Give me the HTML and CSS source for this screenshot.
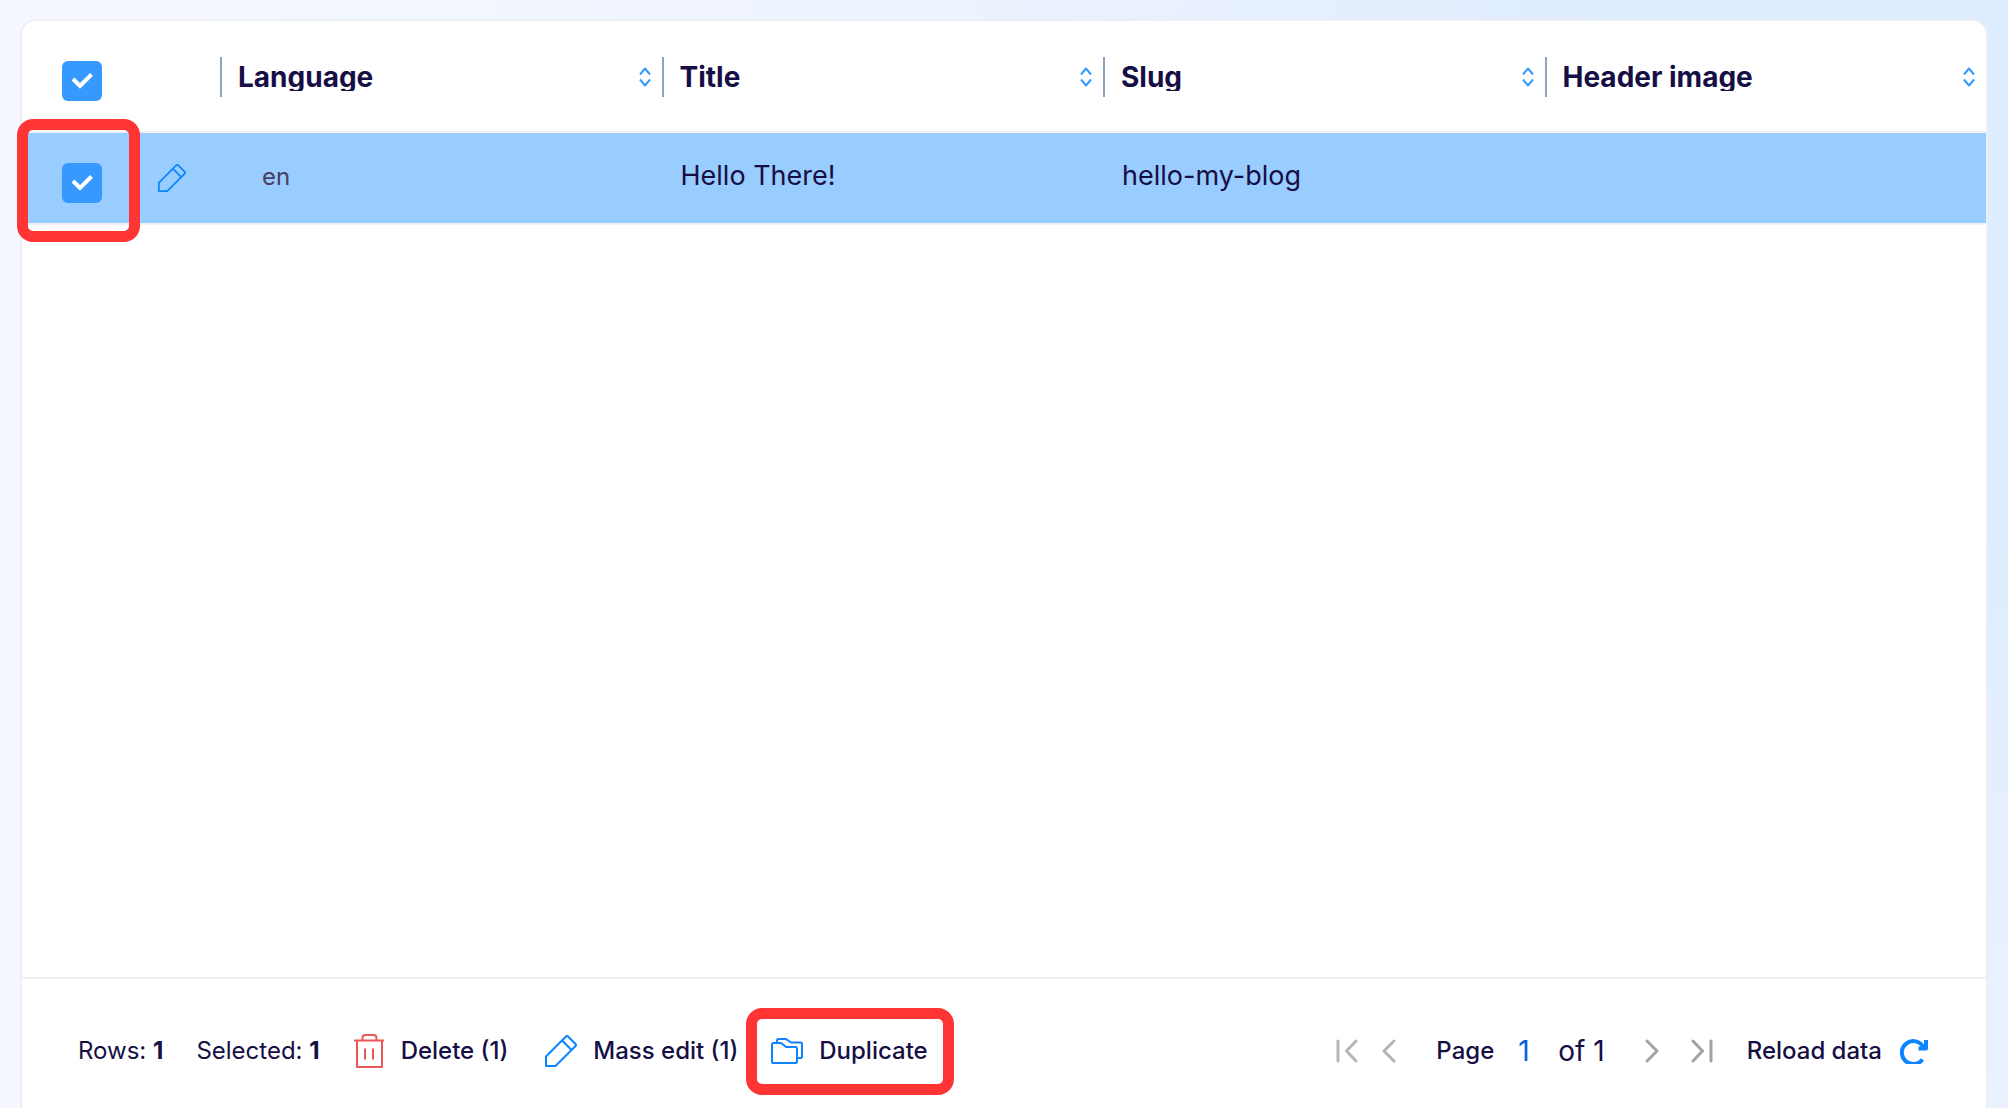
FILE: index.html
```html
<!DOCTYPE html>
<html lang="en">
<head>
<meta charset="utf-8">
<meta name="viewport" content="width=device-width, initial-scale=1">
<title>Blog posts</title>
<link rel="stylesheet" href="styles.css">
</head>
<body>
<svg class="sprite" aria-hidden="true">
  <symbol id="sort" viewBox="0 0 12 20"><path d="M1 7.500 6 1.500l5 6M1 12.500l5 6 5-6"/></symbol>
  <symbol id="pencil" viewBox="0 0 32 32"><path d="M1 31v-9.500L20.700 1.700q1.300-1.300 2.600 0l7 7q1.300 1.300 0 2.600L10.500 31zM17.300 5.500l9.200 9.500"/></symbol>
  <symbol id="trash" viewBox="0 0 32 34"><path d="M1 6.500h30M4 7v26h25V7M9.500 6V4q0-3 3-3h8q3 0 3 3v2M12 14.500v11M20 14.500v11"/></symbol>
  <symbol id="folders" viewBox="0 0 32 26"><path d="M6 5V2.500q0-1.500 1.500-1.500H14q1.500 0 2.500 1l3.500 2.500h9.500q1.500 0 1.500 1.500v12.500q0 1.500-1.500 1.500H27M1 6.500Q1 5 2.500 5H9q1.500 0 2.500 1l3.500 3h9.500q1.500 0 1.500 1.500v13q0 1.500-1.500 1.500h-23Q1 25 1 23.500z"/></symbol>
  <symbol id="first" viewBox="0 0 22 24"><path d="M2 2v20M20 2 10.500 12l9.500 10"/></symbol>
  <symbol id="prev" viewBox="0 0 14 24"><path d="M12 2 2 12l10 10"/></symbol>
  <symbol id="next" viewBox="0 0 14 24"><path d="m2 2 10 10L2 22"/></symbol>
  <symbol id="last" viewBox="0 0 22 24"><path d="m2 2 9.500 10L2 22M20 2v20"/></symbol>
  <symbol id="reload" viewBox="0 0 28 26"><path d="M22.500 21.500A11.500 11.500 0 1 1 23.500 9.200M26 2v8.500H18.500"/></symbol>
</svg>
<main class="card">
  <table class="grid">
    <thead>
      <tr>
        <th class="col-check" scope="col"><input class="check" type="checkbox" aria-label="Select all rows" checked></th>
        <th class="col-edit" scope="col"></th>
        <th class="col" scope="col"><button class="sorter" type="button"><span>Language</span><svg class="sort-icon"><use href="#sort"/></svg></button></th>
        <th class="col" scope="col"><button class="sorter" type="button"><span>Title</span><svg class="sort-icon"><use href="#sort"/></svg></button></th>
        <th class="col" scope="col"><button class="sorter" type="button"><span>Slug</span><svg class="sort-icon"><use href="#sort"/></svg></button></th>
        <th class="col" scope="col"><button class="sorter" type="button"><span>Header image</span><svg class="sort-icon"><use href="#sort"/></svg></button></th>
      </tr>
    </thead>
    <tbody>
      <tr class="selected">
        <td class="col-check"><input class="check" type="checkbox" aria-label="Select row" checked><span class="callout callout-check"></span></td>
        <td class="col-edit"><button class="edit" type="button" aria-label="Edit row"><svg class="edit-icon"><use href="#pencil"/></svg></button></td>
        <td class="lang">en</td>
        <td>Hello There!</td>
        <td>hello-my-blog</td>
        <td></td>
      </tr>
    </tbody>
  </table>
  <footer class="bar">
    <div class="group">
      <span>Rows: <b>1</b></span>
      <span>Selected: <b>1</b></span>
      <button class="action" type="button"><svg class="icon danger" height="34"><use href="#trash"/></svg>Delete (1)</button>
      <button class="action spaced" type="button"><svg class="icon" height="32"><use href="#pencil"/></svg>Mass edit (1)</button>
      <button class="action" type="button"><svg class="icon" height="26"><use href="#folders"/></svg>Duplicate<span class="callout callout-action"></span></button>
    </div>
    <div class="group pager">
      <button class="nav" type="button" aria-label="First page" disabled><svg width="22" height="24"><use href="#first"/></svg></button>
      <button class="nav" type="button" aria-label="Previous page" disabled><svg width="14" height="24"><use href="#prev"/></svg></button>
      <label class="page" for="page">Page</label>
      <input class="page-input" id="page" type="text" value="1">
      <span class="total">of 1</span>
      <button class="nav next" type="button" aria-label="Next page"><svg width="14" height="24"><use href="#next"/></svg></button>
      <button class="nav next" type="button" aria-label="Last page"><svg width="22" height="24"><use href="#last"/></svg></button>
      <button class="action reload" type="button">Reload data<svg class="reload-icon"><use href="#reload"/></svg></button>
    </div>
  </footer>
</main>
</body>
</html>
```
FILE: styles.css
```css
* {
  box-sizing: border-box;
}

body {
  display: flex;
  height: 100vh;
  margin: 0;
  padding: 19px 20px 0;
  overflow: hidden;
  background: radial-gradient(circle at 100% 10%, #deecff 0, #deecff 18%, #e3effe 28%, #e9f0fe 38%, #f0f5ff 60%, #f5f8ff 85%);
  color: #160f45;
  font: 400 24px/32px Inter, "Liberation Sans", sans-serif;
}

button,
input {
  margin: 0;
  padding: 0;
  border: 0;
  background: none;
  color: inherit;
  font: inherit;
}

svg {
  display: block;
  flex: none;
  fill: none;
  stroke: currentColor;
  stroke-width: 2px;
  stroke-linejoin: round;
}

.sprite {
  display: none;
}

.card {
  display: flex;
  flex: 1;
  flex-direction: column;
  min-width: 0;
  border: 2px solid #eeeef5;
  border-bottom: 0;
  border-radius: 16px 16px 0 0;
  background: #fff;
}

.grid {
  width: 100%;
  border-collapse: separate;
  border-spacing: 0;
  table-layout: fixed;
}

th,
td {
  padding: 0;
  border-bottom: 2px solid #f0f0f5;
  text-align: left;
}

th {
  height: 112px;
}

td {
  height: 92px;
  padding: 0 0 5px 19px;
  font-size: 27px;
}

.col-check {
  position: relative;
  width: 118px;
  padding: 10px 0 0 40px;
}

.col-edit {
  width: 80px;
  padding: 7px 0 0 18px;
}

.selected td {
  background: #99ccff;
}

.lang {
  padding: 0 0 2px 42px;
  color: #45405f;
  font-size: 24px;
}

.check {
  display: block;
  width: 40px;
  height: 40px;
  border-radius: 6px;
  background: #3699ff;
  appearance: none;
}

.check:checked {
  background-image: url("data:image/svg+xml,%3Csvg xmlns='http://www.w3.org/2000/svg' viewBox='0 0 40 40'%3E%3Cpath d='m11 18 7 7L29.500 13.500' fill='none' stroke='white' stroke-width='4'/%3E%3C/svg%3E");
}

.sorter {
  display: flex;
  align-items: center;
  justify-content: space-between;
  width: 100%;
  height: 40px;
  margin-top: 2px;
  padding: 0 11px 0 16px;
  border-left: 2px solid #8ea3bd;
  font-size: 28px;
  font-weight: 700;
  line-height: 28px;
}

.sorter span {
  overflow: hidden;
}

.sort-icon {
  width: 12px;
  height: 20px;
  color: #3699ff;
}

.edit-icon {
  width: 28px;
  height: 28px;
  color: #0a84ff;
}

.bar {
  display: flex;
  flex: none;
  align-items: center;
  justify-content: space-between;
  height: 146px;
  margin: auto 0 -15px;
  padding: 0 58px 0 56px;
  border-top: 2px solid #eeeef5;
  white-space: nowrap;
}

.group {
  display: flex;
  align-items: center;
  gap: 33px;
}

b {
  font-weight: 700;
}

.action {
  position: relative;
  display: flex;
  align-items: center;
  gap: 16px;
  font-weight: 500;
}

.spaced {
  margin-left: 4px;
}

.icon {
  width: 32px;
  color: #0a84ff;
}

.danger {
  color: #eb5757;
}

.pager {
  gap: 24px;
}

.nav {
  color: #b5b5b5;
}

.nav svg {
  stroke-linecap: round;
  stroke-width: 3px;
}

.next {
  margin-left: 8px;
  color: #a3a3a3;
}

.page {
  margin-left: 16px;
  font-weight: 500;
}

.page-input {
  width: 16px;
  color: #0562dc;
  font-size: 28px;
}

.total {
  margin-right: 8px;
  font-size: 28px;
}

.reload {
  gap: 18px;
  margin-left: 10px;
}

.reload-icon {
  width: 28px;
  height: 26px;
  color: #0a84ff;
  stroke-width: 4px;
}

.callout {
  position: absolute;
  border: 11px solid #ff3535;
  border-radius: 16px;
  pointer-events: none;
}

.callout-check {
  top: -14px;
  left: -5px;
  width: 123px;
  height: 123px;
}

.callout-action {
  inset: -27px -26px -28px -25px;
}
```
